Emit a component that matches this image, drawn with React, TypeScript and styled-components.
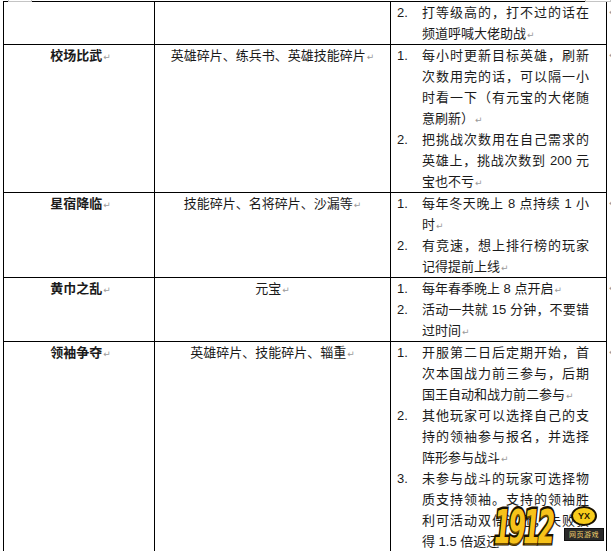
import styled, { createGlobalStyle } from 'styled-components'

const GlobalStyle = createGlobalStyle`
  html, body {
    margin: 0;
    padding: 0;
    background: #fff;
  }
  body {
    font-family: "Liberation Sans", "Noto Sans CJK SC", sans-serif;
    color: #1a1a1a;
    overflow: hidden;
  }
`

type Note = { no: number; lines: string[] }
type Activity = { name: string; reward: string; notes: Note[] }

const rows: Activity[] = [
  {
    name: '',
    reward: '',
    notes: [{ no: 2, lines: ['打等级高的，打不过的话在', '频道呼喊大佬助战'] }],
  },
  {
    name: '校场比武',
    reward: '英雄碎片、练兵书、英雄技能碎片',
    notes: [
      {
        no: 1,
        lines: ['每小时更新目标英雄，刷新', '次数用完的话，可以隔一小', '时看一下（有元宝的大佬随', '意刷新）'],
      },
      { no: 2, lines: ['把挑战次数用在自己需求的', '英雄上，挑战次数到 200 元', '宝也不亏'] },
    ],
  },
  {
    name: '星宿降临',
    reward: '技能碎片、名将碎片、沙漏等',
    notes: [
      { no: 1, lines: ['每年冬天晚上 8 点持续 1 小', '时'] },
      { no: 2, lines: ['有竞速，想上排行榜的玩家', '记得提前上线'] },
    ],
  },
  {
    name: '黄巾之乱',
    reward: '元宝',
    notes: [
      { no: 1, lines: ['每年春季晚上 8 点开启'] },
      { no: 2, lines: ['活动一共就 15 分钟，不要错', '过时间'] },
    ],
  },
  {
    name: '领袖争夺',
    reward: '英雄碎片、技能碎片、辎重',
    notes: [
      { no: 1, lines: ['开服第二日后定期开始，首', '次本国战力前三参与，后期', '国王自动和战力前二参与'] },
      { no: 2, lines: ['其他玩家可以选择自己的支', '持的领袖参与报名，并选择', '阵形参与战斗'] },
      { no: 3, lines: ['未参与战斗的玩家可选择物', '质支持领袖。支持的领袖胜', '利可活动双倍返还，失败获', '得 1.5 倍返还'] },
    ],
  },
]

const Page = styled.div`
  position: relative;
  width: 611px;
  height: 551px;
  overflow: hidden;
  padding-left: 3px;
  box-sizing: border-box;
`

const MarkBar = styled.div`
  display: flex;
  justify-content: space-between;
  height: 1px;
  padding-left: 5px;
`

const CornerMark = styled.div<{ $width: number }>`
  width: ${(p) => p.$width}px;
  height: 1px;
  border: 1px solid #c4c4c4;
  border-top: none;
`

const Table = styled.div`
  width: 604px;
  box-sizing: border-box;
  border-top: 1px solid #000;
  border-left: 1px solid #000;
`

const Row = styled.div`
  display: flex;
  width: 603px;
  border-bottom: 1px solid #000;
`

const Cell = styled.div<{ $width: number }>`
  flex: 0 0 ${(p) => p.$width}px;
  box-sizing: border-box;
  border-right: 1px solid #000;
  font-size: 13px;
`

const NameCell = styled(Cell)`
  text-align: center;
  font-weight: bold;
  padding-left: 3px;
`

const RewardCell = styled(Cell)`
  text-align: center;
`

const NoteCell = styled(Cell)`
  padding: 0 17px 0 6px;
`

const Item = styled.div`
  display: flex;
`

const Num = styled.span`
  flex: 0 0 25px;
  height: 21px;
  line-height: 21px;
`

const Lines = styled.div`
  flex: 1;
`

const Line = styled.div<{ $last?: boolean }>`
  height: 21px;
  line-height: 21px;
  white-space: nowrap;
  text-align: ${(p) => (p.$last ? 'inherit' : 'justify')};
  text-align-last: ${(p) => (p.$last ? 'inherit' : 'justify')};
`

const Ret = styled.span`
  font-family: "DejaVu Sans", sans-serif;
  font-size: 9px;
  line-height: 1;
  font-weight: normal;
  color: #9a9a9a;
  margin-left: 1px;
`

const RowEnd = styled.span`
  flex: 0 0 10px;
  height: 21px;
  padding-left: 2px;
  font-family: "DejaVu Sans", sans-serif;
  font-size: 9px;
  line-height: 21px;
  color: #9a9a9a;
`

const Logo = styled.div`
  position: absolute;
  left: 494px;
  top: 503px;
  display: flex;
  align-items: flex-start;
`

const Digits = styled.span`
  width: 70px;
  height: 48px;
  font-family: "DejaVu Sans", sans-serif;
  font-weight: bold;
  font-style: italic;
  font-size: 46px;
  line-height: 48px;
  letter-spacing: -5px;
  white-space: nowrap;
  color: #f7c21a;
  -webkit-text-stroke: 5px #1a1200;
  paint-order: stroke fill;
  transform: scaleX(0.54);
  transform-origin: left top;
  text-shadow: 0 2px 0 #6b4a00;
`

const Badge = styled.div`
  display: flex;
  flex-direction: column;
  align-items: center;
  gap: 2px;
  padding-top: 3px;
`

const Bubble = styled.span`
  width: 22px;
  height: 16px;
  border-radius: 50%;
  background: #f8cc1c;
  border: 2px solid #1a1200;
  font-family: "Liberation Sans", sans-serif;
  font-weight: bold;
  font-size: 9px;
  line-height: 16px;
  text-align: center;
  color: #2a1a00;
`

const Tag = styled.span`
  width: 38px;
  height: 11px;
  background: #2a2a2a;
  border: 1px solid #111;
  font-family: "Noto Sans CJK SC", sans-serif;
  font-size: 7px;
  line-height: 11px;
  text-align: center;
  color: #f3d36a;
  letter-spacing: 0.5px;
`

function NoteList({ notes }: { notes: Note[] }) {
  return (
    <>
      {notes.map((n) => (
        <Item key={n.no}>
          <Num>{n.no}.</Num>
          <Lines>
            {n.lines.map((l, i) => {
              const last = i === n.lines.length - 1
              return (
                <Line key={i} $last={last}>
                  {l}
                  {last && <Ret>↵</Ret>}
                </Line>
              )
            })}
          </Lines>
        </Item>
      ))}
    </>
  )
}

export default function App() {
  return (
    <Page>
      <GlobalStyle />
      <MarkBar>
        <CornerMark $width={22} />
        <CornerMark $width={24} />
      </MarkBar>
      <Table>
        {rows.map((r, i) => (
          <Row key={i}>
            <NameCell $width={151}>
              <Line $last>
                {r.name}
                {r.name && <Ret>↵</Ret>}
              </Line>
            </NameCell>
            <RewardCell $width={236}>
              <Line $last>
                {r.reward}
                {r.reward && <Ret>↵</Ret>}
              </Line>
            </RewardCell>
            <NoteCell $width={216}>
              <NoteList notes={r.notes} />
            </NoteCell>
            <RowEnd>↵</RowEnd>
          </Row>
        ))}
      </Table>
      <Logo>
        <Digits>1912</Digits>
        <Badge>
          <Bubble>YX</Bubble>
          <Tag>网页游戏</Tag>
        </Badge>
      </Logo>
    </Page>
  )
}
